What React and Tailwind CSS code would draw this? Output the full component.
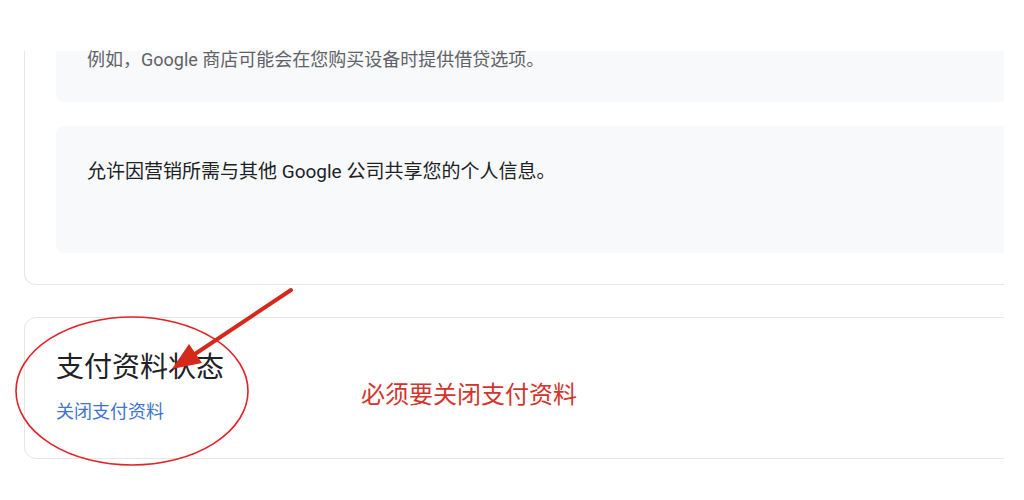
import React from 'react';

const Annotations = () => (
    <svg className="absolute inset-0 pointer-events-none" width="1024" height="500" viewBox="0 0 1024 500">
        {/* circle round the section */}
        <ellipse cx="132" cy="391" rx="116" ry="74" fill="none" stroke="#e32228" strokeWidth="1.6" />
        {/* arrow */}
        <line x1="291" y1="290" x2="192" y2="356" stroke="#d4291b" strokeWidth="4" strokeLinecap="round" />
        <polygon points="172,369 202,363 189,344" fill="#d4291b" />
    </svg>
);

export default function App() {
    return (
        <div className="relative h-[500px] w-[1024px] overflow-hidden bg-white font-[Roboto,'Noto_Sans_CJK_SC',sans-serif]">
            {/* Top spacer */}
            <div className="h-[51px]" />

            {/* Content, cut at the right */}
            <div className="h-[449px] w-[1004px] overflow-x-clip">
                <div className="pl-6">
                    {/* Sharing card (its top is scrolled away) */}
                    <div className="w-[1100px] rounded-b-xl border border-t-0 border-[#e6e6e6] pl-[31px] pb-[31px]">
                        <div className="h-[51px] rounded-b-lg bg-[#f8f9fa] pl-[31px]">
                            <p className="text-[18px] leading-[18px] text-[#5f6368]">
                                例如，Google 商店可能会在您购买设备时提供借贷选项。
                            </p>
                        </div>
                        <div className="mt-6 h-[127px] rounded-lg bg-[#f8f9fa] pl-[31px] pt-[33px]">
                            <p className="text-[19px] leading-[26px] text-[#202124]">
                                允许因营销所需与其他 Google 公司共享您的个人信息。
                            </p>
                        </div>
                    </div>

                    {/* Payment profile status */}
                    <div className="mt-8 w-[1100px] rounded-xl border border-[#e6e6e6] pl-[31px] pt-8 pb-[34px]">
                        <h2 className="text-[28px] leading-9 text-[#202124]">支付资料状态</h2>
                        <a className="mt-[14px] block text-[18px] leading-6 text-[#3f74d0]">关闭支付资料</a>
                    </div>
                </div>
            </div>

            {/* Note written over the screenshot */}
            <div className="absolute left-[361px] top-[379px] text-[24px] leading-8 text-[#d3342c]">
                必须要关闭支付资料
            </div>
            <Annotations />
        </div>
    );
}
